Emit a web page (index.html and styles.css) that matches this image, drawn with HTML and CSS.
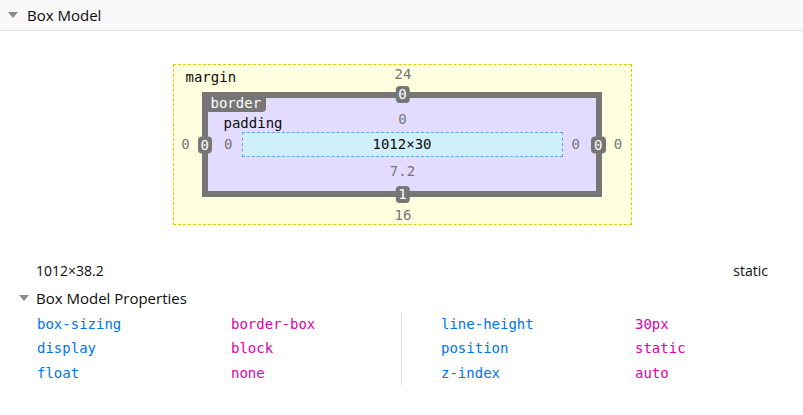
FILE: index.html
```html
<!DOCTYPE html>
<html>
<head>
<meta charset="utf-8">
<link rel="stylesheet" href="styles.css">
</head>
<body>
<div class="header">
  <span class="twisty"></span>
  <span class="header-title">Box Model</span>
</div>
<div class="bm-wrap">
  <div class="bm-margin">
    <div class="m-top"><span class="bm-label m-label">margin</span><span class="num">24</span></div>
    <div class="m-left"><span class="num">0</span></div>
    <div class="bm-border">
      <span class="border-label">border</span>
      <span class="badge b-top">0</span>
      <span class="badge b-left">0</span>
      <span class="badge b-right">0</span>
      <span class="badge b-bottom">1</span>
      <span class="bm-label p-label">padding</span>
      <div class="p-top"><span class="num">0</span></div>
      <div class="p-left"><span class="num">0</span></div>
      <div class="bm-content">1012×30</div>
      <div class="p-right"><span class="num">0</span></div>
      <div class="p-bottom"><span class="num">7.2</span></div>
    </div>
    <div class="m-right"><span class="num">0</span></div>
    <div class="m-bottom"><span class="num">16</span></div>
  </div>
</div>
<div class="info-row">
  <span>1012×38.2</span>
  <span>static</span>
</div>
<div class="props-header">
  <span class="twisty small"></span>
  <span class="props-title">Box Model Properties</span>
</div>
<div class="props">
  <div class="props-col">
    <span class="pn">box-sizing</span><span class="pv">border-box</span>
    <span class="pn">display</span><span class="pv">block</span>
    <span class="pn">float</span><span class="pv">none</span>
  </div>
  <div class="props-col right">
    <span class="pn">line-height</span><span class="pv">30px</span>
    <span class="pn">position</span><span class="pv">static</span>
    <span class="pn">z-index</span><span class="pv">auto</span>
  </div>
</div>
</body>
</html>
```

FILE: styles.css
```css
* { box-sizing: border-box; }
html, body { margin: 0; padding: 0; background: #ffffff; }
body {
  width: 803px;
  height: 415px;
  overflow: hidden;
  font-family: "Open Sans", "Noto Sans", sans-serif;
  color: #0c0c0d;
}
.header {
  height: 31px;
  background: #f9f9fa;
  border-bottom: 1px solid #e0e0e2;
  display: flex;
  align-items: center;
  padding-left: 8px;
  gap: 9px;
}
.twisty {
  width: 0;
  height: 0;
  border-left: 5px solid transparent;
  border-right: 5px solid transparent;
  border-top: 6px solid #8c8c8e;
}
.header-title { font-size: 15px; line-height: 18px; }

.bm-wrap {
  display: flex;
  justify-content: center;
  padding-top: 33px;
  padding-left: 1px;
}
.bm-margin {
  position: relative;
  width: 459px;
  height: 161px;
  border: 1px dashed #d2d200;
  background: #ffffe0;
  display: grid;
  grid-template-columns: 28px 400px 29px;
  grid-template-rows: 27px 105px 27px;
  font-family: "DejaVu Sans Mono", monospace;
  font-size: 14px;
  line-height: 17px;
}
.num { color: #767676; }
.bm-label { position: absolute; color: #0c0c0d; }
.m-label { left: 12px; top: 4px; }
.m-top {
  grid-column: 1 / 4;
  display: flex;
  justify-content: center;
  padding-top: 1px;
  padding-left: 2px;
}
.m-left, .m-right {
  display: flex;
  align-items: center;
  justify-content: center;
}
.m-left { padding-right: 4px; }
.m-right { padding-left: 4px; }
.m-bottom {
  grid-column: 1 / 4;
  display: flex;
  justify-content: center;
  padding-top: 10px;
  padding-left: 2px;
}
.bm-border {
  position: relative;
  border: 6px solid #767676;
  background: #e3dcff;
  display: grid;
  grid-template-columns: 34px 321px 33px;
  grid-template-rows: 34px 25px 34px;
}
.border-label {
  position: absolute;
  left: -1px;
  top: -3px;
  background: #767676;
  color: #ffffff;
  padding: 0 5px 0 4px;
  border-bottom-right-radius: 4px;
}
.p-label { left: 16px; top: 17px; }
.badge {
  position: absolute;
  background: #767676;
  color: #ffffff;
  padding: 0 3px;
  border-radius: 4px;
  height: 17px;
  line-height: 17px;
}
.b-top { left: 50%; top: -12px; transform: translateX(-50%); margin-left: 1px; }
.b-bottom { left: 50%; bottom: -12px; transform: translateX(-50%); margin-left: 1px; }
.b-left { left: -10px; top: 50%; transform: translateY(-50%); }
.b-right { right: -10px; top: 50%; transform: translateY(-50%); }
.p-top {
  grid-column: 1 / 4;
  display: flex;
  justify-content: center;
  padding-top: 13px;
  padding-left: 2px;
}
.p-bottom {
  grid-column: 1 / 4;
  display: flex;
  justify-content: center;
  padding-top: 6px;
  padding-left: 2px;
}
.p-left {
  display: flex;
  align-items: center;
  justify-content: flex-end;
  padding-right: 9px;
}
.p-right {
  display: flex;
  align-items: center;
  justify-content: flex-start;
  padding-left: 9px;
}
.bm-content {
  background: #cfeffb;
  border: 1px dashed #5ea0f3;
  display: flex;
  align-items: center;
  justify-content: center;
  color: #0c0c0d;
}

.info-row {
  display: flex;
  justify-content: space-between;
  padding: 37px 35px 0 36px;
  font-size: 14px;
  line-height: 18px;
}
.props-header {
  display: flex;
  align-items: center;
  gap: 7px;
  padding: 9px 0 0 19px;
}
.props-title { font-size: 15px; line-height: 18px; }
.props {
  display: flex;
  padding-top: 5px;
  font-family: "DejaVu Sans Mono", monospace;
  font-size: 14px;
}
.props-col {
  display: grid;
  grid-template-columns: 194px auto;
  grid-auto-rows: 24.3px;
  align-items: center;
  width: 401px;
  padding-left: 37px;
}
.props-col.right {
  width: 402px;
  border-left: 1px solid #e0e0e2;
  padding-left: 39px;
}
.pn { color: #0074e8; }
.pv { color: #dd00a9; }
```
